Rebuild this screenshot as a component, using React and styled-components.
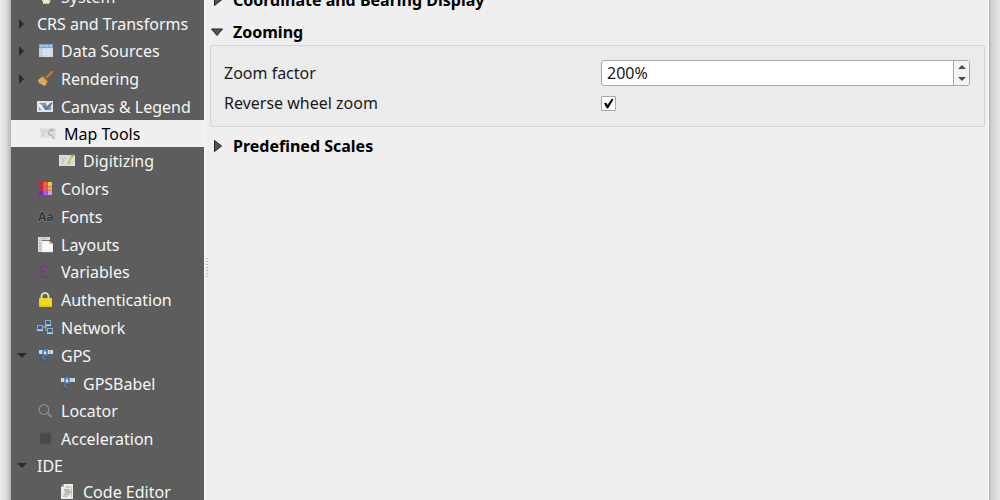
import React, { useState } from 'react'
import styled, { createGlobalStyle } from 'styled-components'

const GlobalStyle = createGlobalStyle`
    * {
        box-sizing: border-box;
    }
    body {
        margin: 0;
        background: #e6e6e6;
        font-family: "Noto Sans", "Open Sans", sans-serif;
        font-size: 16px;
        color: #1a1a1a;
    }
    button, input {
        font: inherit;
        color: inherit;
    }
`

/////////////
const Desktop = styled.div`
    display: flex;
    height: 100vh;
    padding: 0 11px;
    overflow: hidden;
    background: linear-gradient(90deg, #ececec 0, #dedede 6px, #b4b4b4 11px, #a8a8a8 calc(100% - 11px), #cfcfcf calc(100% - 9px), #e6e6e6 100%);
`

const Dialog = styled.div`
    flex: 1;
    display: flex;
    min-width: 0;
    background: #efefef;
`

const Sidebar = styled.nav`
    flex: 0 0 193px;
    overflow: hidden;
    background: #5d5d5d;
`

const Tree = styled.ul`
    list-style: none;
    margin: -17px 0 0;
    padding: 0;
`

const TreeRow = styled.li`
    display: flex;
    align-items: center;
    height: ${(props) => props.$height}px;
    padding-left: ${(props) => props.$child ? 22 : 0}px;
    background: ${(props) => props.$active ? "#efefef" : "transparent"};
    color: ${(props) => props.$active ? "#000000" : "#f6f6f6"};
`

const Expander = styled.button`
    display: flex;
    align-items: center;
    justify-content: center;
    width: 22px;
    height: 20px;
    padding: 0;
    border: 0;
    background: none;
    visibility: ${(props) => props.$hidden ? "hidden" : "visible"};
`

const TreeLink = styled.button`
    display: flex;
    align-items: center;
    gap: 8px;
    margin-left: ${(props) => props.$active ? 7 : 4}px;
    padding: 0;
    border: 0;
    background: none;
    line-height: 20px;
    white-space: nowrap;
    svg {
        flex: none;
    }
`

const Splitter = styled.div`
    display: flex;
    align-items: center;
    width: 6px;
    padding-top: 34px;
    border-left: 1px solid #fafafa;
`

const Content = styled.main`
    flex: 1;
    min-width: 0;
    padding-right: 3px;
    border-right: 1px solid #fbfbfb;
`

const Sections = styled.div`
    display: flex;
    flex-direction: column;
    gap: 6px;
    margin-top: -13px;
`

const SectionTitle = styled.button`
    display: flex;
    align-items: center;
    gap: 9px;
    height: 26px;
    padding: 0;
    border: 0;
    background: none;
    color: #000000;
    font-weight: 700;
    white-space: nowrap;
`

const Panel = styled.div`
    display: grid;
    grid-template-columns: 1fr 1fr;
    grid-template-rows: 26px 26px;
    gap: 4px 8px;
    align-items: center;
    padding: 14px 14px 10px 13px;
    border: 1px solid #d4d4d4;
    border-radius: 2px;
    background: #ebebeb;
`

const SpinBox = styled.div`
    display: flex;
    height: 26px;
    border: 1px solid #a8a8a8;
    border-radius: 3px;
    background: #ffffff;
    overflow: hidden;
    input {
        flex: 1;
        min-width: 0;
        padding: 0 5px;
        border: 0;
        outline: 0;
        background: none;
    }
`

const Steps = styled.div`
    display: flex;
    flex-direction: column;
    width: 16px;
    border-left: 1px solid #a8a8a8;
    background: #f4f4f4;
    button {
        flex: 1;
        display: flex;
        align-items: center;
        justify-content: center;
        padding: 0;
        border: 0;
        background: none;
    }
`

const CheckBox = styled.input`
    appearance: none;
    width: 15px;
    height: 15px;
    margin: 0;
    border: 1px solid #a8a8a8;
    border-radius: 1px;
    background: #ffffff;
    &:checked {
        background: #ffffff url("data:image/svg+xml,%3Csvg xmlns='http://www.w3.org/2000/svg' viewBox='0 0 13 13'%3E%3Cpath d='M2.5 6.5L4 6l1.6 2.4L10 2l1 .5L6 11H5z' fill='%23000' stroke='%23000' stroke-width='.8'/%3E%3C/svg%3E") center / 13px 13px no-repeat;
    }
`

/////////////
const Svg = ({ children }) => (
  <svg width="16" height="16" viewBox="0 0 16 16" aria-hidden="true">{children}</svg>
)

const SystemIcon = () => (
  <Svg>
    <path d="M5 8l5-3 4 3-1 6-5 1-3-3z" fill="#c9cdd0" />
    <path d="M9 6l2 3 4 1-3 2v3l-3-1-3 1v-3l-3-2 4-1z" fill="#e9e4a4" />
    <circle cx="9" cy="11" r="2" fill="#f8f8ef" />
  </Svg>
)

const TableIcon = () => (
  <Svg>
    <path d="M2 1h14v13H2z" fill="#cfdae5" />
    <path d="M2 1h14v4H2z" fill="#7ba4cc" />
    <path d="M3 2h3v2H3zM7 2h4v2H7zM12 2h3v2h-3z" fill="#a5c4e1" />
    <path d="M2 5h4v9H2z" fill="#bccbd9" />
    <path d="M6.500 5v9M11.500 5v9M2 8h14M2 11h14" stroke="#e4ebf2" strokeWidth=".6" />
  </Svg>
)

const BrushIcon = () => (
  <Svg>
    <path d="M15 1L10 6" stroke="#c9822b" strokeWidth="2" strokeLinecap="round" />
    <path d="M6 5l5 5-1 2-6-6z" fill="#c77c27" />
    <path d="M5 6l5 5-2 4-2-1-2-1-2-1-1-3z" fill="#e6b265" />
    <path d="M3 10l3 3M5 8l3 4" stroke="#c48b3f" strokeWidth=".8" />
  </Svg>
)

const CanvasIcon = () => (
  <Svg>
    <path d="M0 2h16v11H0z" fill="#dfe3e5" />
    <path d="M2 4h12v7H2z" fill="#7297b9" />
    <path d="M2 4l4 3 2 4H5L2 8zM9 4h4l-3 3z" fill="#edf0f0" />
    <path d="M6 7l3 3 6-6" stroke="#4a769f" strokeWidth="1.500" fill="none" />
  </Svg>
)

const MapToolsIcon = () => (
  <Svg>
    <path d="M0 2h16v10H0z" fill="#e0e0e0" />
    <path d="M1 3l3 3-2 5M5 3l2 3M10 3h4l-3 3" stroke="#c6c6c6" fill="none" />
    <path d="M14 5a3 3 0 0 0-5 1c-1 2 0 3 2 3M11 7l3 6" stroke="#b2b2b2" strokeWidth="1.500" fill="none" />
    <path d="M10 6l2 1-1 2z" fill="#f7f7f7" />
  </Svg>
)

const DigitizeIcon = () => (
  <Svg>
    <path d="M0 2h16v11H0z" fill="#dcdcd9" />
    <path d="M2 4l3 3-2 4M5 4l2 2M9 11l3-2" stroke="#aeb2ae" fill="none" />
    <path d="M13 1l2 1-5 8-2 2 1-4z" fill="#d7bd4c" />
    <path d="M13 1l2 1-1 2-2-1z" fill="#a49152" />
  </Svg>
)

const swatches = [
  "#e01b24", "#f0692c", "#f6c33c",
  "#c9204c", "#e45c70", "#f3a45c",
  "#7c24c8", "#a962d6", "#c5a1ee",
]

const ColorsIcon = () => (
  <Svg>
    <path d="M2 1h13v13H2z" fill="#b14e68" />
    {swatches.map((color, i) => (
      <rect key={i} x={2 + (i % 3) * 4.5} y={1 + Math.floor(i / 3) * 4.5} width="4" height="4" fill={color} />
    ))}
  </Svg>
)

const FontsIcon = () => (
  <Svg>
    <text x="1" y="12" fontFamily="Open Sans, sans-serif" fontWeight="700" fontSize="12" fill="#2f3739" stroke="#858989" strokeWidth="1" paintOrder="stroke">Aa</text>
  </Svg>
)

const LayoutsIcon = () => (
  <Svg>
    <path d="M1 0h12v3H5v12H1z" fill="#d8d8d8" />
    <path d="M3 3v1M3 6v1M3 9v1M3 12v1M6 1v1M9 1v1" stroke="#8e8e8e" />
    <path d="M5 4h7l4 3v8H5z" fill="#fafafa" stroke="#c9c9c9" strokeWidth=".5" />
    <path d="M12 4v3h4z" fill="#bdbdbd" />
  </Svg>
)

const VariablesIcon = () => (
  <Svg>
    <path d="M12 4C10 1 4 1 4 4.500c0 2 2 2.500 4 2.500C5 7 3 8 3 10c0 4 7 4 9 1" stroke="#6e4472" strokeWidth="2" fill="none" />
  </Svg>
)

const LockIcon = () => (
  <Svg>
    <path d="M4.500 8V4.500a3.500 3.500 0 0 1 7 0V8" stroke="#d4d4d4" strokeWidth="2" fill="none" />
    <rect x="2" y="6" width="13" height="9" rx="1" fill="#eddb1d" />
    <path d="M2.500 14h12" stroke="#d2bd0b" />
  </Svg>
)

const NetworkIcon = () => (
  <Svg>
    <path d="M5 7h4M9 5v6" stroke="#a6b3bd" fill="none" />
    {[[0, 5], [8, 0], [10, 8]].map(([x, y]) => (
      <g key={x}>
        <path d={`M${x} ${y}h6v5h-6z`} fill="#91a9bf" />
        <path d={`M${x + 1} ${y + 1}h4v3h-4z`} fill="#2f5f9c" />
        <path d={`M${x} ${y + 5.5}h6`} stroke="#c9d0d4" />
      </g>
    ))}
  </Svg>
)

const GpsIcon = () => (
  <Svg>
    <path d="M2 2h4v4H2zM10 2h6v4h-6z" fill="#c9def0" />
    <path d="M13 2v4" stroke="#8fb4d6" strokeWidth=".8" />
    <path d="M5 2l4-1 2 1v5l-4 1-2-2z" fill="#5788b9" />
    <path d="M7 3l2 1v2H7z" fill="#dce8f0" />
    <path d="M2 7c0 5 2 7 7 6l-3-2-2-4z" fill="#47596b" />
    <path d="M5 8c0 2 1 3 3 3" stroke="#6a93ba" fill="none" />
  </Svg>
)

const LocatorIcon = () => (
  <Svg>
    <circle cx="7" cy="6.500" r="4.800" fill="none" stroke="#8c8c8c" strokeWidth="1.300" />
    <path d="M10.500 10l4 4" stroke="#8c8c8c" strokeWidth="1.800" />
  </Svg>
)

const ChipIcon = () => (
  <Svg>
    <path d="M3 2h11v11H3z" fill="#4b4b4b" stroke="#525252" strokeDasharray="1 1" strokeWidth="2" />
    <path d="M4 3h9v9H4z" fill="#494949" />
  </Svg>
)

const CodeIcon = () => (
  <Svg>
    <path d="M5 0h9v15H2V3z" fill="#ecece9" />
    <path d="M2 3h3V0z" fill="#a9aaa7" />
    <path d="M7 3h4M4 12h5" stroke="#a0a09d" />
    <path d="M5 6h6M6 8h6" stroke="#6b9b62" strokeWidth="1.200" />
    <path d="M5 10h6" stroke="#8b98a3" />
    <path d="M12.500 2v11" stroke="#cfbcb9" />
  </Svg>
)

const shapes = {
  right: "M2 0l5 5-5 5z",
  down: "M0 2h10L5 7z",
}

const Arrow = ({ open }) => (
  <svg width="10" height="10" viewBox="0 0 10 10" aria-hidden="true">
    <path d={open ? shapes.down : shapes.right} fill="#2b2b2b" />
  </svg>
)

const TitleArrow = ({ open }) => (
  <svg width="14" height="14" viewBox="0 0 14 14" aria-hidden="true">
    <path d={open ? "M1.500 4h11L7 10.500z" : "M4.500 1.500v11l7-5.500z"} fill="#555555" stroke="#222222" />
  </svg>
)

const items = [
  { label: "System", icon: SystemIcon, height: 28 },
  { label: "CRS and Transforms", height: 26, branch: "closed" },
  { label: "Data Sources", icon: TableIcon, height: 28, branch: "closed" },
  { label: "Rendering", icon: BrushIcon, height: 28, branch: "closed" },
  { label: "Canvas & Legend", icon: CanvasIcon, height: 27 },
  { label: "Map Tools", icon: MapToolsIcon, height: 27 },
  { label: "Digitizing", icon: DigitizeIcon, height: 28, child: true },
  { label: "Colors", icon: ColorsIcon, height: 28 },
  { label: "Fonts", icon: FontsIcon, height: 28 },
  { label: "Layouts", icon: LayoutsIcon, height: 27 },
  { label: "Variables", icon: VariablesIcon, height: 28 },
  { label: "Authentication", icon: LockIcon, height: 28 },
  { label: "Network", icon: NetworkIcon, height: 28 },
  { label: "GPS", icon: GpsIcon, height: 28, branch: "open" },
  { label: "GPSBabel", icon: GpsIcon, height: 27, child: true },
  { label: "Locator", icon: LocatorIcon, height: 28 },
  { label: "Acceleration", icon: ChipIcon, height: 28 },
  { label: "IDE", height: 26, branch: "open" },
  { label: "Code Editor", icon: CodeIcon, height: 26, child: true },
]

const OptionsTree = () => {
  const [current, setCurrent] = useState("Map Tools")
  return (
    <Sidebar>
      <Tree>
        {items.map(({ label, icon: Icon, height, branch, child }) => (
          <TreeRow key={label} $height={height} $child={child} $active={label === current}>
            <Expander $hidden={!branch} aria-label={label}>
              {branch && <Arrow open={branch === "open"} />}
            </Expander>
            <TreeLink $active={label === current} onClick={() => setCurrent(label)}>
              {Icon && <Icon />}
              {label}
            </TreeLink>
          </TreeRow>
        ))}
      </Tree>
    </Sidebar>
  )
}

const ZoomPanel = () => {
  const [zoom, setZoom] = useState(200)
  const [reverse, setReverse] = useState(true)
  return (
    <Panel>
      <label htmlFor="zoom-factor">Zoom factor</label>
      <SpinBox>
        <input id="zoom-factor" value={`${zoom}%`} onChange={(e) => setZoom(parseInt(e.target.value) || 0)} />
        <Steps>
          <button aria-label="Increase" onClick={() => setZoom(zoom + 1)}>
            <svg width="8" height="4" viewBox="0 0 8 4"><path d="M0 4l4-4 4 4z" fill="#4c4c4c" /></svg>
          </button>
          <button aria-label="Decrease" onClick={() => setZoom(zoom - 1)}>
            <svg width="8" height="4" viewBox="0 0 8 4"><path d="M0 0l4 4 4-4z" fill="#4c4c4c" /></svg>
          </button>
        </Steps>
      </SpinBox>
      <label htmlFor="reverse-zoom">Reverse wheel zoom</label>
      <CheckBox id="reverse-zoom" type="checkbox" checked={reverse} onChange={() => setReverse(!reverse)} />
    </Panel>
  )
}

const App = () => {
  const [open, setOpen] = useState(true)
  return (
    <Desktop>
      <GlobalStyle />
      <Dialog>
        <OptionsTree />
        <Splitter>
          <svg width="4" height="20" viewBox="0 0 4 20" aria-hidden="true">
            <path d="M2 1v19" stroke="#bdbdbd" strokeWidth="2" strokeDasharray="1 2" />
          </svg>
        </Splitter>
        <Content>
          <Sections>
            <SectionTitle><TitleArrow />Coordinate and Bearing Display</SectionTitle>
            <section>
              <SectionTitle onClick={() => setOpen(!open)}><TitleArrow open={open} />Zooming</SectionTitle>
              {open && <ZoomPanel />}
            </section>
            <SectionTitle><TitleArrow />Predefined Scales</SectionTitle>
          </Sections>
        </Content>
      </Dialog>
    </Desktop>
  )
}

export default App
